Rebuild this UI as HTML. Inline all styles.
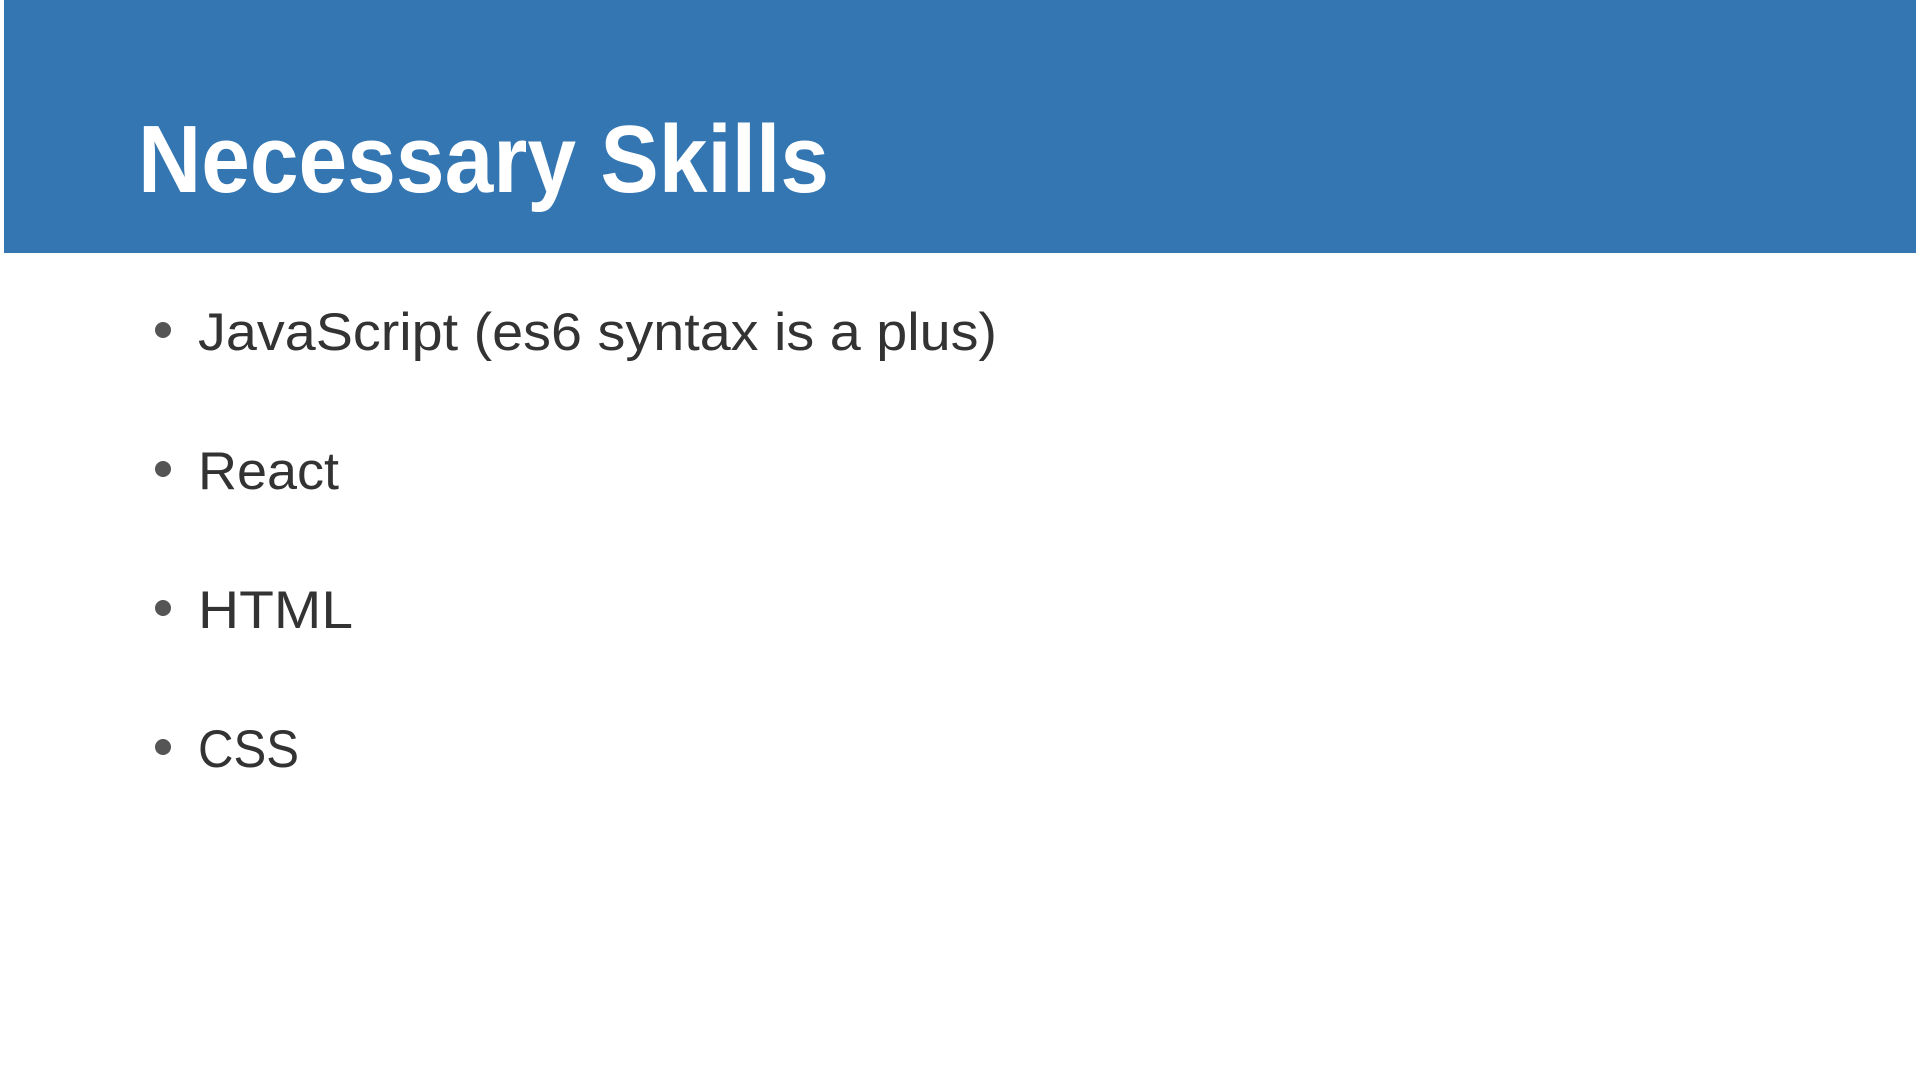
<!DOCTYPE html>
<html><head><style>html,body{margin:0;padding:0;background:#fff;width:1920px;height:1080px;overflow:hidden}</style></head>
<body>
<svg width="1920" height="1080" xmlns="http://www.w3.org/2000/svg" style="display:block">
<rect x="0" y="0" width="1920" height="1080" fill="#fff"/>
<rect x="4" y="0" width="1912" height="253" fill="#3476b1"/>
<text x="138" y="192" font-family="Liberation Sans, sans-serif" font-weight="bold" font-size="96" fill="#fff" textLength="691" lengthAdjust="spacingAndGlyphs">Necessary Skills</text>
<g font-family="Liberation Sans, sans-serif" font-size="53" fill="#333">
<circle cx="163" cy="330" r="8" fill="#555"/>
<text x="198" y="350" textLength="799" lengthAdjust="spacingAndGlyphs">JavaScript (es6 syntax is a plus)</text>
<circle cx="163" cy="469" r="8" fill="#555"/>
<text x="198" y="489" textLength="141" lengthAdjust="spacingAndGlyphs">React</text>
<circle cx="163" cy="608" r="8" fill="#555"/>
<text x="198" y="628" textLength="155" lengthAdjust="spacingAndGlyphs">HTML</text>
<circle cx="163" cy="747" r="8" fill="#555"/>
<text x="198" y="767" textLength="101" lengthAdjust="spacingAndGlyphs">CSS</text>
</g>
</svg>
</body></html>
